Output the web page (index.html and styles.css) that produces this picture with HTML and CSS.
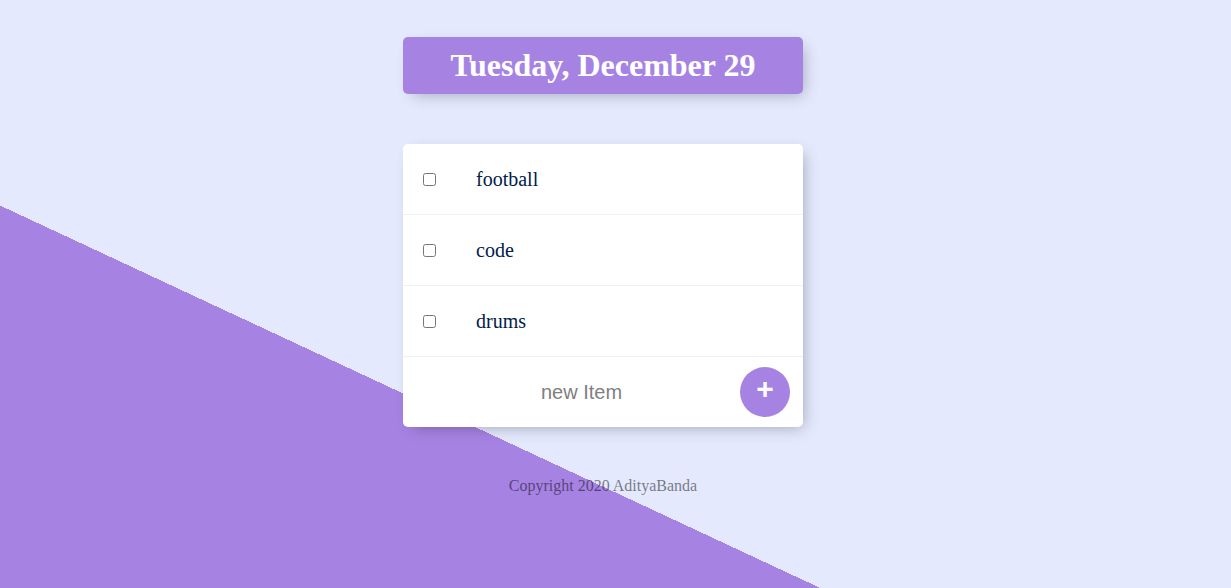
FILE: index.html
```html
<!DOCTYPE html>
<html lang="en">
<head>
<meta charset="utf-8">
<title>To Do List</title>
<link rel="stylesheet" href="styles.css">
</head>
<body>
<div class="page">
  <div class="box heading">
    <h1>Tuesday, December 29</h1>
  </div>
  <div class="box list">
    <div class="item">
      <input type="checkbox">
      <p>football</p>
    </div>
    <div class="item">
      <input type="checkbox">
      <p>code</p>
    </div>
    <div class="item">
      <input type="checkbox">
      <p>drums</p>
    </div>
    <form class="item new-item">
      <input type="text" name="newItem" placeholder="new Item" autocomplete="off">
      <button type="button" name="list">+</button>
    </form>
  </div>
  <footer class="footer">Copyright 2020 AdityaBanda</footer>
</div>
</body>
</html>
```
FILE: styles.css
```css
html {
  background-color: #E4E9FD;
  background-image: linear-gradient(25deg, #A683E3 50%, #E4E9FD 50%);
  background-size: 1231px 985px;
  background-repeat: no-repeat;
  height: 100%;
  overflow: hidden;
  font-family: "Liberation Serif", "Times New Roman", serif;
}

body {
  margin: 0;
}

.page {
  width: 1206px;
  padding-top: 37px;
}

.box {
  max-width: 400px;
  margin: 0 auto 50px;
  background: #fff;
  border-radius: 5px;
  box-shadow: 5px 5px 15px -5px rgba(0, 0, 0, 0.3);
}

.heading {
  background-color: #A683E3;
  text-align: center;
}

h1 {
  margin: 0;
  padding: 10px;
  color: #fff;
  font-size: 32px;
  font-weight: bold;
  line-height: 37px;
}

.item {
  min-height: 70px;
  display: flex;
  align-items: center;
  border-bottom: 1px solid #F1F1F1;
}

.item:last-child {
  border-bottom: 0;
}

.item input[type="checkbox"] {
  margin: 20px;
  width: 13px;
  height: 13px;
}

.item p {
  margin: 0;
  padding: 20px;
  font-size: 20px;
  font-weight: 200;
  color: #00204a;
}

.new-item {
  margin: 0 0 0 20px;
  text-align: center;
}

.new-item input[type="text"] {
  text-align: center;
  height: 60px;
  border: none;
  background: transparent;
  font-family: "Liberation Sans", Arial, sans-serif;
  font-size: 20px;
  font-weight: 200;
  width: 313px;
  padding: 1px 2px;
  margin: 0;
}

.new-item input[type="text"]::placeholder {
  color: grey;
  opacity: 1;
}

.new-item button {
  width: 50px;
  height: 50px;
  border-radius: 50%;
  border: 0;
  background-color: #A683E3;
  color: #fff;
  font-family: "Liberation Sans", Arial, sans-serif;
  font-size: 30px;
  font-weight: bold;
  padding: 0 0 6px;
  margin: 0;
  line-height: 1;
}

.footer {
  color: rgba(0, 0, 0, 0.5);
  text-align: center;
  font-size: 16px;
}
```
